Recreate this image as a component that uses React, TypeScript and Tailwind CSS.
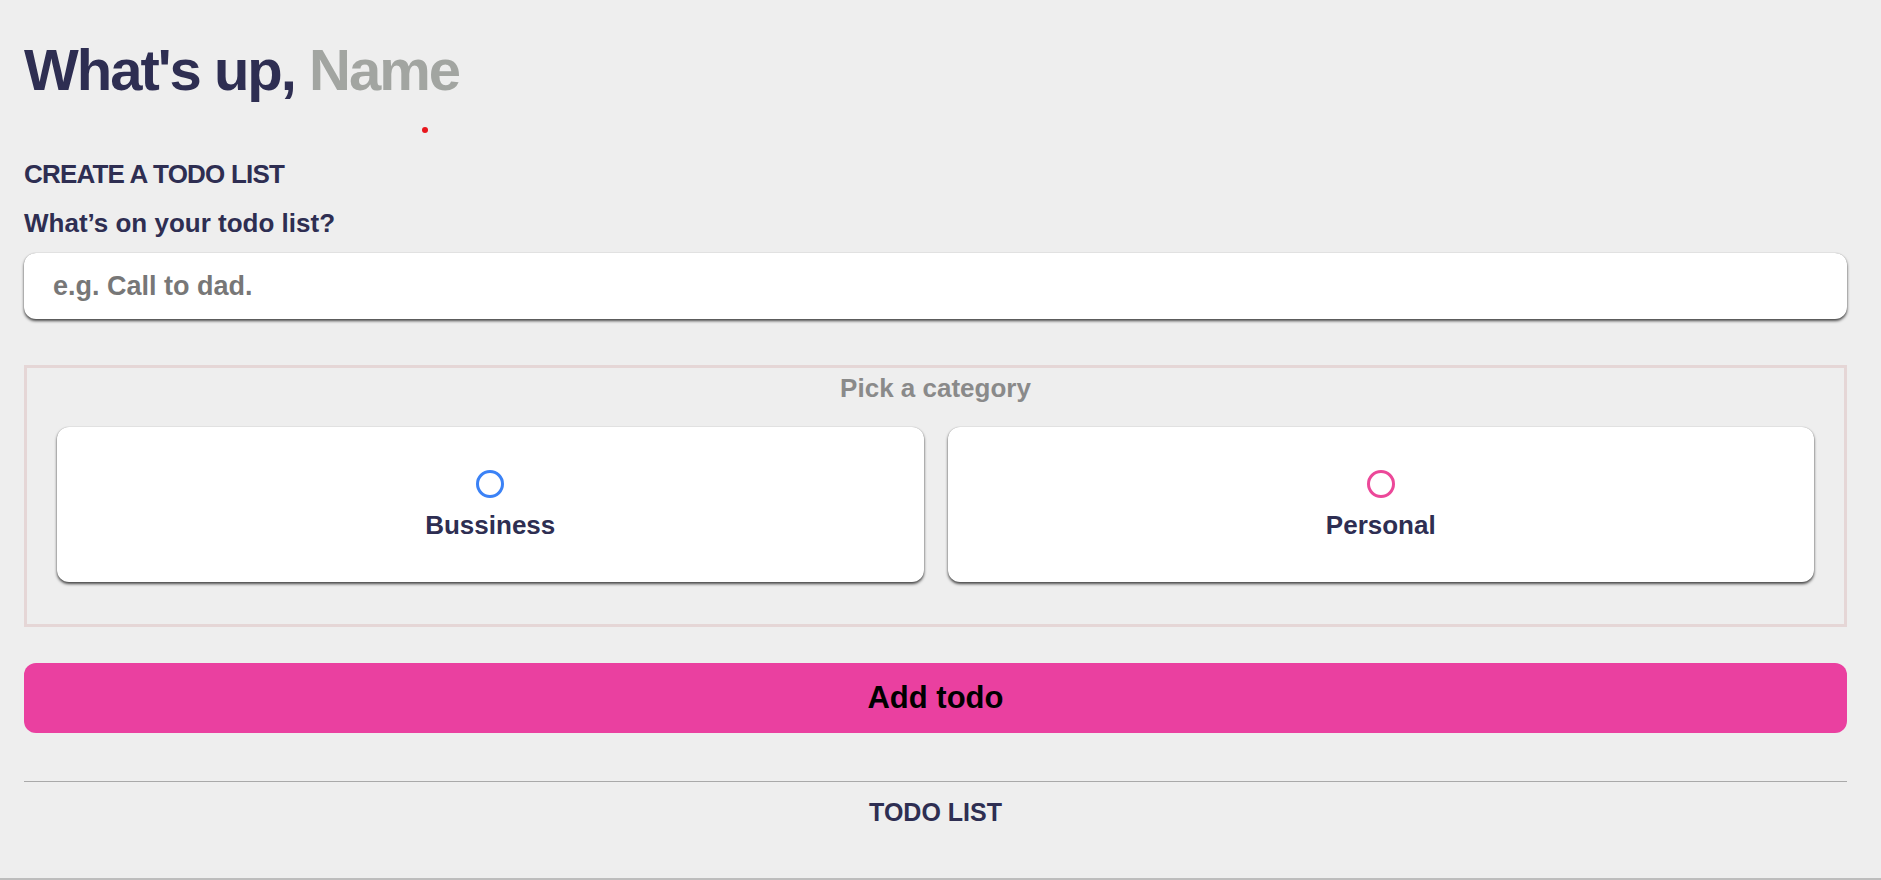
import { useState } from 'react';

const categories = [
  { id: 'business', label: 'Bussiness', ring: 'border-[#3b82f6]', dot: 'bg-[#3b82f6]' },
  { id: 'personal', label: 'Personal', ring: 'border-[#ec4899]', dot: 'bg-[#ec4899]' },
];

export default function App() {
  const [todo, setTodo] = useState('');
  const [category, setCategory] = useState<string | null>(null);

  return (
    <div className="flex h-[880px] flex-col overflow-hidden bg-[#eeeeee] font-['Liberation_Sans',Arial,sans-serif] font-bold text-[#2e2e52]">
      <main className="flex-1 pl-6 pr-[34px] pt-[41px]">
        <h1 className="text-[58px] leading-[58px] tracking-[-2px]">
          What's up, <span className="text-[#a2a5a1]">Name</span>
        </h1>
        <div className="ml-[398px] mt-[28px] h-[6px] w-[6px] rounded-full bg-[#e8161d]" />

        <section className="mt-[26px]">
          <h3 className="text-[26px] leading-[30px] tracking-[-0.8px]">CREATE A TODO LIST</h3>
          <h4 className="mt-[19px] text-[26px] leading-[30px]">What’s on your todo list?</h4>

          <input
            type="text"
            value={todo}
            onChange={(e) => setTodo(e.target.value)}
            placeholder="e.g. Call to dad."
            className="mt-[15px] block h-[66px] w-full rounded-xl bg-white px-[29px] text-[27px] font-bold text-[#2e2e52] shadow-[0_2px_3px_rgba(0,0,0,0.7),0_0_1px_rgba(0,0,0,0.3)] outline-none placeholder:text-[#777777]"
          />

          <div className="mt-[46px] border-[3px] border-[#e5d6d6] px-[30px] pb-[42px] pt-[5px]">
            <h4 className="text-center text-[26px] leading-[30px] text-[#8a8a8a]">Pick a category</h4>
            <div className="mt-[24px] grid grid-cols-2 gap-6">
              {categories.map((c) => (
                <label
                  key={c.id}
                  onClick={() => setCategory(c.id)}
                  className="flex h-[155px] cursor-pointer flex-col items-center justify-center gap-3 rounded-xl bg-white shadow-[0_2px_3px_rgba(0,0,0,0.7),0_0_1px_rgba(0,0,0,0.3)]"
                >
                  <span className={`flex h-7 w-7 items-center justify-center rounded-full border-[3px] ${c.ring}`}>
                    {category === c.id && <span className={`h-3 w-3 rounded-full ${c.dot}`} />}
                  </span>
                  <span className="text-[26px] leading-[30px]">{c.label}</span>
                </label>
              ))}
            </div>
          </div>

          <button className="mt-[36px] block h-[70px] w-full rounded-xl bg-[#ea40a0] text-[31px] font-bold text-black">
            Add todo
          </button>
        </section>

        <section className="mt-[48px] border-t border-[#a9a9a9] pt-[15px]">
          <h3 className="text-center text-[25px] leading-[30px]">TODO LIST</h3>
        </section>
      </main>
      <div className="h-[2px] bg-[#bdbdbd]" />
    </div>
  );
}
